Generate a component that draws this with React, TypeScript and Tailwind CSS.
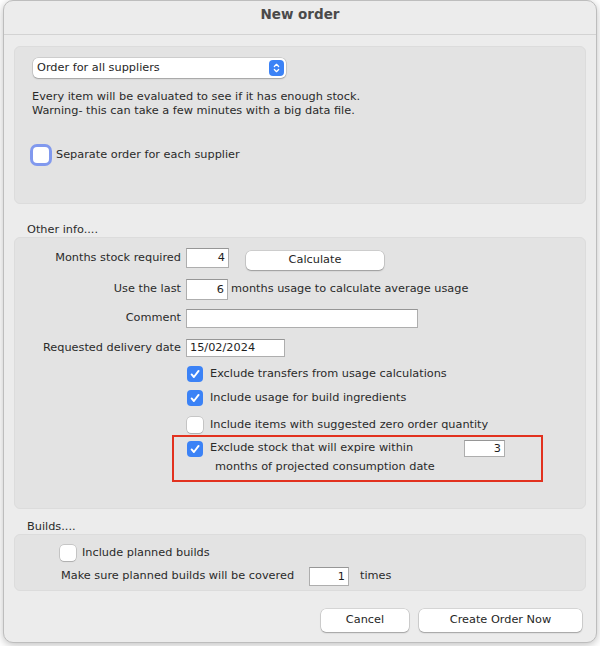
import React from 'react';
import clsx from 'clsx';

const Check = ({ checked, focus }: { checked?: boolean; focus?: boolean }) => (
  <span
    className={clsx(
      'flex h-4 w-4 shrink-0 items-center justify-center rounded-[4px]',
      checked
        ? 'bg-[#3b82f6]'
        : 'bg-white shadow-[0_0_0_0.5px_rgba(0,0,0,0.25),0_1px_1px_rgba(0,0,0,0.12)]',
      focus && 'ring-[3px] ring-[#8199ee]'
    )}
  >
    {checked && (
      <svg viewBox="0 0 12 12" className="h-3 w-3">
        <path
          d="M2.6 6.4l2.3 2.6L9.6 2.9"
          stroke="white"
          strokeWidth="1.9"
          fill="none"
          strokeLinecap="round"
          strokeLinejoin="round"
        />
      </svg>
    )}
  </span>
);

const Field = ({ className, value, left }: { className: string; value?: string; left?: boolean }) => (
  <div
    className={clsx(
      'flex shrink-0 items-center border border-[#aeaeae] border-t-[#969696] bg-white px-[3px] text-[11.3px] leading-none text-[#1e1e1e]',
      left ? 'justify-start' : 'justify-end',
      className
    )}
  >
    {value}
  </div>
);

const MacButton = ({ className, children }: { className: string; children: React.ReactNode }) => (
  <button
    type="button"
    className={clsx(
      'flex items-center justify-center rounded-[5px] bg-white text-[11.3px] text-[#262626] shadow-[0_0_0_0.5px_rgba(0,0,0,0.18),0_1px_1.5px_rgba(0,0,0,0.25)]',
      className
    )}
  >
    {children}
  </button>
);

export default function App() {
  return (
    <div className="h-[646px] w-[600px] overflow-hidden bg-white pl-[3px] font-['DejaVu_Sans',sans-serif] text-[11.3px] text-[#2a2a2a]">
      <div className="flex h-[643px] w-[594px] flex-col rounded-[10px] border border-[#bdbdbd] bg-[#ececec] shadow-[0_2px_8px_rgba(0,0,0,0.25)]">
        {/* title bar */}
        <div className="flex h-[34px] shrink-0 justify-center border-b border-[#d3d3d3] pt-[4px] text-[13.5px] leading-[18px] font-bold text-[#4a4a4a]">
          New order
        </div>

        <div className="flex flex-col px-[10px] pt-[11px]">
          {/* supplier group */}
          <div className="flex h-[158px] flex-col rounded-[6px] border border-[#dcdcdc] bg-[#e3e3e3]">
            <div className="ml-[18px] mt-[11px] flex h-[20px] w-[253px] items-center justify-between rounded-[5px] bg-white pl-[4px] pr-[2px] shadow-[0_0_0_0.5px_rgba(0,0,0,0.18),0_1px_1.5px_rgba(0,0,0,0.22)]">
              <span className="text-[11.3px] text-[#262626]">Order for all suppliers</span>
              <span className="flex h-[16px] w-[15px] items-center justify-center rounded-[4px] bg-[#3b82f6]">
                <svg viewBox="0 0 10 14" className="h-[12px] w-[9px]">
                  <path d="M2.5 5.2L5 2.7l2.5 2.5M2.5 8.8L5 11.3l2.5-2.5" stroke="white" strokeWidth="1.5" fill="none" strokeLinecap="round" strokeLinejoin="round" />
                </svg>
              </span>
            </div>
            <div className="ml-[17px] mt-[12px] leading-[14px]">
              <div>Every item will be evaluated to see if it has enough stock.</div>
              <div>Warning- this can take a few minutes with a big data file.</div>
            </div>
            <div className="ml-[18px] mt-[29px] flex h-[16px] items-center gap-[7px]">
              <Check focus />
              <span>Separate order for each supplier</span>
            </div>
          </div>

          <div className="ml-[13px] mt-[19px] leading-[14px]">Other info....</div>

          {/* other info group */}
          <div className="flex h-[272px] flex-col rounded-[6px] border border-[#dcdcdc] bg-[#e3e3e3]">
            <div className="mt-[10px] flex h-[20px] items-center">
              <span className="w-[166px] text-right">Months stock required</span>
              <Field className="ml-[5px] h-[20px] w-[43px]" value="4" />
              <MacButton className="ml-[17px] mt-[5px] h-[19px] w-[138px]">Calculate</MacButton>
            </div>
            <div className="mt-[11px] flex h-[21px] items-center">
              <span className="w-[166px] text-right">Use the last</span>
              <Field className="ml-[5px] h-[21px] w-[42px]" value="6" />
              <span className="ml-[3px]">months usage to calculate average usage</span>
            </div>
            <div className="mt-[9px] flex h-[19px] items-center">
              <span className="w-[166px] text-right">Comment</span>
              <Field className="ml-[5px] h-[19px] w-[232px]" />
            </div>
            <div className="mt-[11px] flex h-[18px] items-center">
              <span className="w-[166px] text-right">Requested delivery date</span>
              <Field className="ml-[5px] h-[18px] w-[99px]" value="15/02/2024" left />
            </div>
            <div className="ml-[172px] mt-[9px] flex h-[16px] items-center gap-[7px]">
              <Check checked />
              <span>Exclude transfers from usage calculations</span>
            </div>
            <div className="ml-[172px] mt-[8px] flex h-[16px] items-center gap-[7px]">
              <Check checked />
              <span>Include usage for build ingredients</span>
            </div>
            <div className="ml-[172px] mt-[11px] flex h-[16px] items-center gap-[7px]">
              <Check />
              <span>Include items with suggested zero order quantity</span>
            </div>
            <div className="ml-[157px] mt-[2px] flex h-[47px] w-[371px] flex-col border-2 border-[#e2321f]">
              <div className="ml-[13px] mt-[3px] flex h-[17px] items-center gap-[7px]">
                <Check checked />
                <span className="w-[247px]">Exclude stock that will expire within</span>
                <Field className="h-[17px] w-[41px]" value="3" />
              </div>
              <div className="ml-[41px] mt-[3px] leading-[14px]">months of projected consumption date</div>
            </div>
          </div>

          <div className="ml-[13px] mt-[11px] leading-[14px]">Builds....</div>

          {/* builds group */}
          <div className="flex h-[57px] flex-col rounded-[6px] border border-[#dcdcdc] bg-[#e3e3e3]">
            <div className="ml-[45px] mt-[10px] flex h-[16px] items-center gap-[6px]">
              <Check />
              <span>Include planned builds</span>
            </div>
            <div className="ml-[46px] mt-[6px] flex h-[19px] items-center">
              <span className="w-[248px]">Make sure planned builds will be covered</span>
              <Field className="h-[19px] w-[40px]" value="1" />
              <span className="ml-[11px]">times</span>
            </div>
          </div>

          {/* actions */}
          <div className="mr-[4px] mt-[18px] flex justify-end gap-[10px]">
            <MacButton className="h-[23px] w-[88px]">Cancel</MacButton>
            <MacButton className="h-[23px] w-[163px]">Create Order Now</MacButton>
          </div>
        </div>
      </div>
    </div>
  );
}
